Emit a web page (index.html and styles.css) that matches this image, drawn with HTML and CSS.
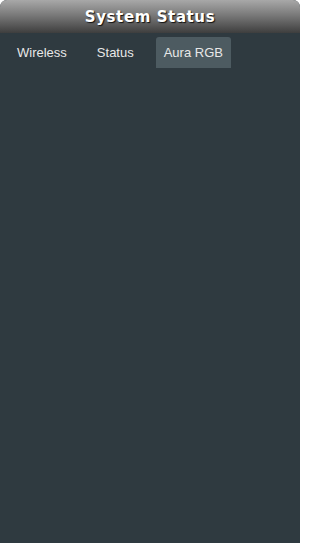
FILE: index.html
```html
<!DOCTYPE html>
<html>
<head>
<meta charset="utf-8">
<link rel="stylesheet" href="styles.css">
</head>
<body>
<div class="panel">
  <div class="header">System Status</div>
  <div class="tabs">
    <div class="tab">Wireless</div>
    <div class="tab">Status</div>
    <div class="tab active">Aura RGB</div>
  </div>
  <div class="content"></div>
</div>
</body>
</html>
```
FILE: styles.css
```css
html, body {
  margin: 0;
  padding: 0;
  background: #ffffff;
  overflow: hidden;
}
.panel {
  width: 300px;
  height: 543px;
  display: flex;
  flex-direction: column;
  background: #2f3a40;
  border-radius: 7px 7px 0 0;
  overflow: hidden;
}
.header {
  height: 33px;
  flex: none;
  display: flex;
  align-items: center;
  justify-content: center;
  background: linear-gradient(to bottom, #a8a8a8 0%, #7a7a7a 45%, #3e3e3e 100%);
  color: #ffffff;
  font-family: "DejaVu Sans", Verdana, sans-serif;
  font-weight: bold;
  font-size: 15px;
  letter-spacing: 0.6px;
  text-shadow: 1px 1px 1px #111111;
}
.tabs {
  display: flex;
  padding: 4px 0 0 9px;
  gap: 14px;
}
.tab {
  height: 31px;
  padding: 0 8px;
  display: flex;
  align-items: center;
  color: #e8e8e8;
  font-family: "Liberation Sans", Arial, sans-serif;
  font-size: 13px;
  border-radius: 3px 3px 0 0;
}
.tab.active {
  background: #4d5b61;
}
.content {
  flex: 1;
}
```
